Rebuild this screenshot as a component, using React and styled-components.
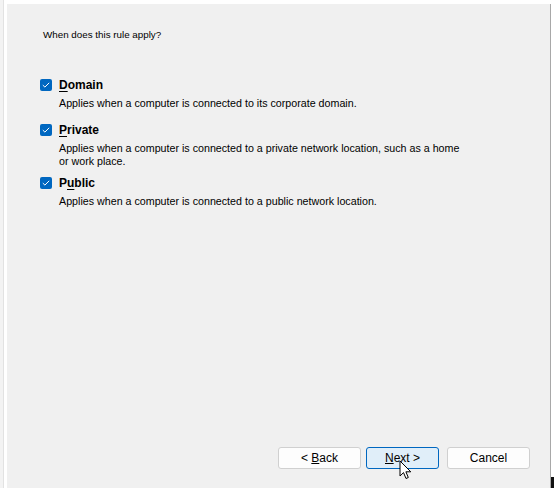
import React from "react";
import styled, { createGlobalStyle } from "styled-components";

const GlobalStyle = createGlobalStyle`
  html, body {
    margin: 0;
    padding: 0;
    background: #ffffff;
  }
  body {
    font-family: "Liberation Sans", Arial, sans-serif;
    color: #000000;
  }
`;

const Frame = styled.div`
  width: 554px;
  height: 488px;
  display: flex;
  background: #ffffff;
  overflow: hidden;
  position: relative;
`;

const LeftEdge = styled.div`
  width: 3px;
  margin-right: 3px;
  background: #f3f3f3;
  border-right: 1px solid #e2e2e2;
`;

const Page = styled.div`
  flex: 1;
  margin-top: 4px;
  display: flex;
  flex-direction: column;
  background: #f0f0f0;
  border-right: 1px solid #a8a8a8;
`;

const RightEdge = styled.div`
  width: 3px;
  background: #ffffff;
`;

const Content = styled.div`
  flex: 1;
  padding: 25px 0 0 34px;
`;

const Question = styled.div`
  font-size: 9.8px;
  line-height: 12px;
  margin: 0 0 37px 2px;
`;

const Option = styled.div`
  display: grid;
  grid-template-columns: 18px 1fr;
  row-gap: 5px;
  margin-bottom: ${(p) => p.gap}px;
`;

const Box = styled.span`
  width: 12px;
  height: 12px;
  border-radius: 2px;
  background: #0067c0;
  display: flex;
  align-items: center;
  justify-content: center;
  margin-left: -1px;
  margin-top: 1px;
`;

const Label = styled.span`
  font-size: 12px;
  font-weight: 700;
  line-height: 14px;

  u {
    text-decoration-thickness: 1px;
    text-underline-offset: 2px;
  }
`;

const Desc = styled.div`
  grid-column: 2;
  font-size: 10.7px;
  line-height: 13px;
  width: 408px;
`;

const Footer = styled.div`
  display: flex;
  justify-content: flex-end;
  gap: 5px;
  padding: 0 20px 19px 0;
`;

const Button = styled.button`
  width: ${(p) => p.w}px;
  height: 22px;
  border-radius: 3px;
  border: 1px solid ${(p) => (p.primary ? "#0067c0" : "#d0d0d0")};
  background: ${(p) => (p.primary ? "#e0eef9" : "#fdfdfd")};
  font-family: "Liberation Sans", Arial, sans-serif;
  font-size: 12px;
  color: #000000;
  padding: 0;
  margin-left: ${(p) => p.extra || 0}px;
`;

const Cursor = styled.svg`
  position: absolute;
  left: 399px;
  top: 460px;
`;

const Corner = styled.div`
  position: absolute;
  right: 0;
  bottom: 0;
  width: 3px;
  height: 11px;
  background: #111111;
`;

function Check() {
  return (
    <Box>
      <svg width="8" height="6" viewBox="0 0 8 6">
        <path d="M0.8 3.1 L2.9 5.1 L7.2 0.8" fill="none" stroke="#ffffff" strokeWidth="1" />
      </svg>
    </Box>
  );
}

export default function App() {
  return (
    <Frame>
      <GlobalStyle />
      <LeftEdge />
      <Page>
        <Content>
          <Question>When does this rule apply?</Question>
          <Option gap={13}>
            <Check />
            <Label>
              <u>D</u>omain
            </Label>
            <Desc>Applies when a computer is connected to its corporate domain.</Desc>
          </Option>
          <Option gap={8}>
            <Check />
            <Label>
              <u>P</u>rivate
            </Label>
            <Desc>
              Applies when a computer is connected to a private network location, such as a home
              or work place.
            </Desc>
          </Option>
          <Option gap={0}>
            <Check />
            <Label>
              P<u>u</u>blic
            </Label>
            <Desc>Applies when a computer is connected to a public network location.</Desc>
          </Option>
        </Content>
        <Footer>
          <Button w={83}>
            &lt; <u>B</u>ack
          </Button>
          <Button w={73} primary>
            <u>N</u>ext &gt;
          </Button>
          <Button w={83} extra={3}>
            Cancel
          </Button>
        </Footer>
      </Page>
      <RightEdge />
      <Corner />
      <Cursor width="14" height="22" viewBox="0 0 14 22">
        <path
          d="M1 1 L1 16 L4.5 12.6 L7 18.5 L9.3 17.5 L6.9 11.8 L11.8 11.8 Z"
          fill="#ffffff"
          stroke="#000000"
          strokeWidth="1"
          strokeLinejoin="round"
        />
      </Cursor>
    </Frame>
  );
}
